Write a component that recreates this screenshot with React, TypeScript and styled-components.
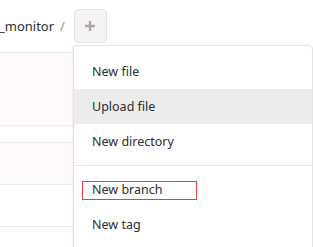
import styled, { createGlobalStyle } from 'styled-components'

const GlobalStyle = createGlobalStyle`
    body {
        margin: 0;
        background: #fff;
        font-family: "Noto Sans", "Segoe UI", sans-serif;
        color: #2e2e2e;
        overflow: hidden;
    }
`

interface RowProps {
    $height: number
    $tint?: boolean
}

const Page = styled.div`
    position: relative;
    width: 313px;
    height: 247px;
    overflow: hidden;
`

const Breadcrumb = styled.div`
    display: flex;
    align-items: center;
    height: 52px;
    font-size: 13px;
    color: #2e2e2e;
`

const Crumb = styled.span`
    margin-left: -1px;
`

const Separator = styled.span`
    color: #8f8f8f;
    margin: 0 9px 0 6px;
`

const AddWrap = styled.div`
    position: relative;
    height: 34px;
`

const AddButton = styled.button`
    display: flex;
    align-items: center;
    justify-content: center;
    width: 33px;
    height: 34px;
    padding: 0;
    border: 1px solid #e6e3e6;
    border-radius: 4px;
    background: #f5f3f5;
`

const FileList = styled.div`
    border-top: 1px solid #e8e8e8;
`

const Row = styled.div<RowProps>`
    height: ${props => props.$height}px;
    background: ${props => props.$tint ? '#fdf9fd' : '#fff'};
    border-bottom: 1px solid #ececec;
`

const Menu = styled.ul`
    position: absolute;
    top: 45px;
    left: 73px;
    width: 240px;
    margin: 0;
    padding: 8px 0;
    list-style: none;
    background: #fff;
    border: 1px solid #e3e3e3;
    border-radius: 4px;
    box-shadow: -1px 0 2px rgba(0, 0, 0, 0.06);
    box-sizing: border-box;
`

const Item = styled.li<{ $active?: boolean }>`
    position: relative;
    display: flex;
    align-items: center;
    height: 35px;
    padding: 0 18px;
    font-size: 12.5px;
    color: #2e2e2e;
    background: ${props => props.$active ? '#ececec' : 'transparent'};
`

// red annotation box drawn over the "New branch" entry
const Marker = styled.span`
    position: absolute;
    left: 8px;
    top: 9px;
    width: 115px;
    height: 19px;
    border: 1px solid #e8403f;
    box-sizing: border-box;
`

const Divider = styled.li`
    height: 1px;
    margin: 6px 0;
    background: #e5e5e5;
`

const App = () => {
    return (
        <>
            <GlobalStyle />
            <Page>
                <Breadcrumb>
                    <Crumb>_monitor</Crumb>
                    <Separator>/</Separator>
                    <AddWrap>
                        <AddButton>
                            <svg width="12" height="12" viewBox="0 0 12 12">
                                <path d="M6 1v10M1 6h10" stroke="#a9a5a9" strokeWidth="2.4" />
                            </svg>
                        </AddButton>
                    </AddWrap>
                </Breadcrumb>
                <FileList>
                    <Row $height={72} $tint />
                    <Row $height={16} />
                    <Row $height={41} $tint />
                    <Row $height={41} />
                    <Row $height={41} />
                </FileList>
                <Menu>
                    <Item>New file</Item>
                    <Item $active>Upload file</Item>
                    <Item>New directory</Item>
                    <Divider />
                    <Item>
                        <Marker />
                        New branch
                    </Item>
                    <Item>New tag</Item>
                </Menu>
            </Page>
        </>
    )
}

export default App
